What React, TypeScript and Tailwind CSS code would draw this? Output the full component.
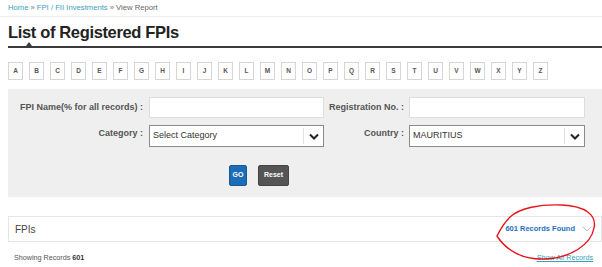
import React from 'react';

const letters = 'ABCDEFGHIJKLMNOPQRSTUVWXYZ'.split('');

function Chevron({ className }: { className?: string }) {
  return (
    <svg width="10" height="7" viewBox="0 0 10 7" className={className}>
      <polyline points="1,1.5 5,5.5 9,1.5" fill="none" stroke="#222" strokeWidth="2" />
    </svg>
  );
}

function SelectBox({ value }: { value: string }) {
  return (
    <div className="flex h-[22px] items-center border border-[#8a8a8a] bg-white">
      <span className="flex-1 pl-[3px] text-[9px] text-[#333]">{value}</span>
      <span className="h-[16px] w-px bg-[#e2e2e2]" />
      <span className="flex w-[19px] justify-center">
        <Chevron />
      </span>
    </div>
  );
}

export default function App() {
  return (
    <div className="relative h-[267px] w-[602px] overflow-hidden bg-white font-['Liberation_Sans',Arial,sans-serif]">
      {/* breadcrumb */}
      <div className="flex h-[17px] items-start border-b border-[#eeeeee] pl-2 pt-[3px] text-[7.7px] leading-[10px]">
        <span className="text-[#3a9fc0]">Home</span>
        <span className="px-[2px] text-[#777]">»</span>
        <span className="text-[#3a9fc0]">FPI / FII Investments</span>
        <span className="px-[2px] text-[#777]">»</span>
        <span className="text-[#666]">View Report</span>
      </div>

      <div className="pl-2">
        {/* heading */}
        <div className="relative border-b-2 border-[#3a3a3a] pb-[4px] pt-[5px]">
          <h1 className="text-[16.5px] font-bold leading-[20px] tracking-[-0.35px] text-[#222]">
            List of Registered FPIs
          </h1>
          <span className="absolute bottom-0 left-[18px] h-0 w-0 border-x-[3px] border-b-[4px] border-x-transparent border-b-[#3a3a3a]" />
        </div>

        {/* alphabet */}
        <div className="mt-[14px] flex gap-[6px]">
          {letters.map((l) => (
            <span
              key={l}
              className="flex h-[18px] min-w-[15px] items-center justify-center border border-[#d6d6d6] px-[3px] text-[6.5px] font-bold text-[#555]"
            >
              {l}
            </span>
          ))}
        </div>

        {/* search form */}
        <div className="mt-[9px] bg-[#efefef] pb-[11px] pt-[8px]">
          <div className="flex items-center">
            <span className="w-[135px] text-right text-[9px] font-bold text-[#555]">FPI Name(% for all records) :</span>
            <div className="ml-[6px] h-[21px] w-[175px] border border-[#dddddd] bg-white" />
            <span className="w-[80px] text-right text-[9px] font-bold text-[#555]">Registration No. :</span>
            <div className="ml-[5px] h-[21px] w-[176px] border border-[#dddddd] bg-white" />
          </div>
          <div className="mt-[7px] flex items-center">
            <span className="mb-[4px] w-[135px] text-right text-[9px] font-bold text-[#555]">Category :</span>
            <div className="ml-[6px] w-[175px]">
              <SelectBox value="Select Category" />
            </div>
            <span className="mb-[4px] w-[80px] text-right text-[9px] font-bold text-[#555]">Country :</span>
            <div className="ml-[5px] w-[176px]">
              <SelectBox value="MAURITIUS" />
            </div>
          </div>
          <div className="ml-[221px] mt-[18px] flex gap-[11px]">
            <span className="flex h-[21px] w-[18px] items-center justify-center rounded-[2px] border border-[#135a9a] bg-[#1c6db5] text-[7px] font-bold text-white">
              GO
            </span>
            <span className="flex h-[21px] w-[31px] items-center justify-center rounded-[2px] border border-[#444] bg-[#555] text-[7px] font-bold text-white">
              Reset
            </span>
          </div>
        </div>

        {/* results header */}
        <div className="mt-[19px] flex h-[26px] items-center justify-between border border-[#e6e6e6] pl-[6px] pr-[9px]">
          <span className="text-[10px] text-[#444]">FPIs</span>
          <div className="flex items-center gap-[7px]">
            <span className="text-[7.5px] font-bold text-[#1e70bd]">601 Records Found</span>
            <svg width="10" height="6" viewBox="0 0 10 6">
              <polyline points="0.5,0.5 5,5 9.5,0.5" fill="none" stroke="#c4c4c4" strokeWidth="1" />
            </svg>
          </div>
        </div>

        <div className="mt-[11px] flex items-center justify-between pl-[6px] pr-[9px] text-[7.2px] leading-[10px]">
          <span className="text-[#555]">
            Showing Records <b className="text-[#333]">601</b>
          </span>
          <span className="text-[#3aa0b8] underline">Show All Records</span>
        </div>
      </div>

      {/* hand-drawn red annotation */}
      <svg className="pointer-events-none absolute left-0 top-0" width="602" height="267" viewBox="0 0 602 267">
        <path
          d="M 510 217 C 520 208, 540 204, 562 205 C 585 206, 597 215, 594 228 C 591 245, 570 258, 545 259 C 522 260, 506 250, 497 236 C 500 230, 503 224, 510 217"
          fill="none"
          stroke="#e8141b"
          strokeWidth="1.4"
        />
      </svg>
    </div>
  );
}
